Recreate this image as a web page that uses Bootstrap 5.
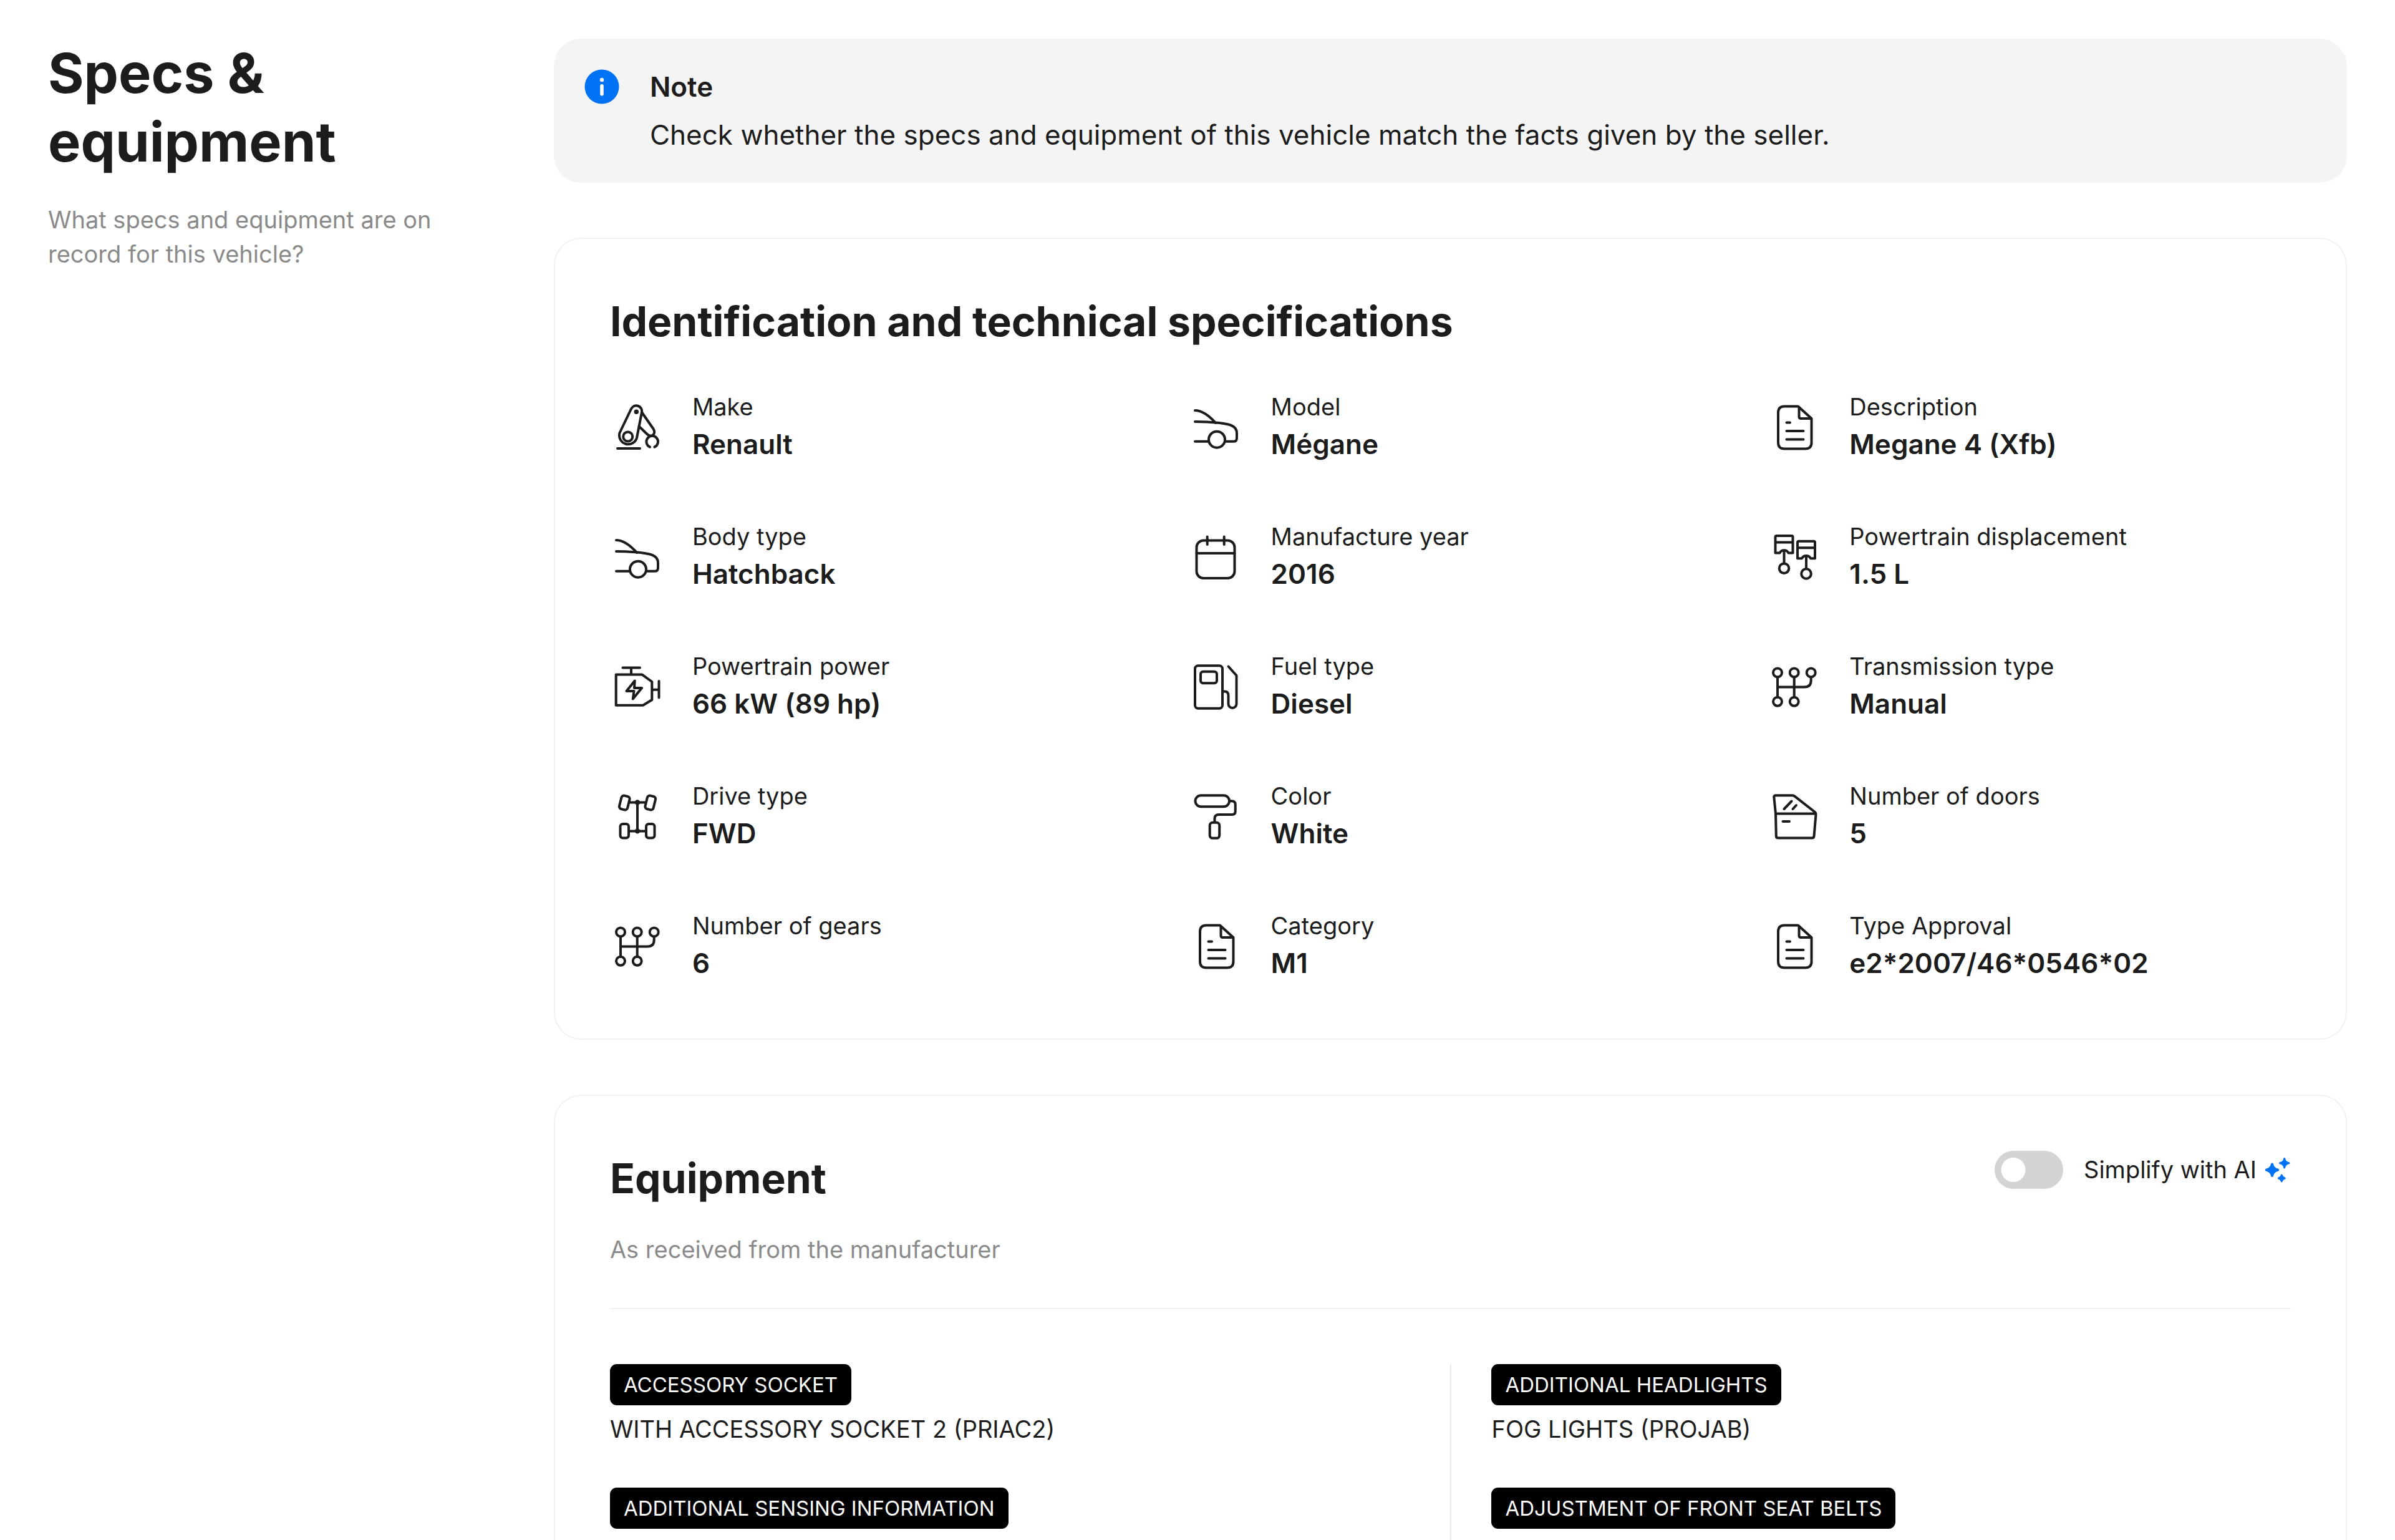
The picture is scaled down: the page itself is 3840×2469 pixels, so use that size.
<!DOCTYPE html>
<html lang="en">
<head>
<meta charset="utf-8">
<meta name="viewport" content="width=device-width, initial-scale=1">
<title>Specs &amp; equipment</title>
<link href="https://cdn.jsdelivr.net/npm/bootstrap@5.3.0/dist/css/bootstrap.min.css" rel="stylesheet">
<style>
  :root { --ink: #1c1c1c; --muted: #8a8a8a; --hairline: #f1f1f1; --accent: #0072f5; }
  body { font-family: Inter, "Liberation Sans", sans-serif; color: var(--ink); background: #fff; font-size: 38px; line-height: 55px; }
  .page { padding: 62px 77px; }
  .intro { flex: 0 0 22%; padding-right: 88px; }
  .page-title { font-size: 88px; line-height: 110px; font-weight: 700; margin-bottom: 43px; }
  .soft { color: var(--muted); }
  .stack { gap: 88px; min-width: 0; }
  .note { background: #f4f4f4; border-radius: 44px; padding: 44px; gap: 44px; font-size: 44px; line-height: 66px; }
  .note-title { font-size: 44px; line-height: 66px; font-weight: 600; margin-bottom: 11px; }
  .note-icon { width: 66px; height: 66px; }
  .panel { border: 2px solid var(--hairline); border-radius: 44px; }
  .panel > .card-body { padding: 88px; }
  .panel-title { font-size: 66px; line-height: 88px; font-weight: 700; margin: 0; }
  .specs { --bs-gutter-x: 88px; --bs-gutter-y: 88px; margin-top: -22px; }
  .spec { gap: 44px; }
  .spec-icon { width: 88px; height: 88px; fill: none; stroke: var(--ink); stroke-width: 4; stroke-linecap: round; stroke-linejoin: round; }
  .spec dt { font-weight: 400; line-height: 54px; }
  .spec dd { font-size: 44px; line-height: 66px; font-weight: 600; margin: 0; font-variant-ligatures: no-contextual; }
  .ai-toggle { gap: 33px; }
  .ai-toggle .form-check-input { width: 110px; height: 61px; margin: 0; border: 0; border-radius: 31px; background: radial-gradient(circle at 30px 50%, #fff 19px, #d4d4d4 20px); }
  .ai-toggle .form-check-input:checked { background: radial-gradient(circle at 80px 50%, #fff 19px, var(--accent) 20px); }
  .ai-label { gap: 11px; }
  .ai-icon { width: 44px; height: 44px; fill: var(--accent); stroke: var(--accent); stroke-width: 3; stroke-linejoin: round; }
  .equipment-head { border-bottom: 2px solid var(--hairline); padding-bottom: 66px; margin-bottom: 88px; }
  .equipment-sub { margin-top: 43px; }
  .equipment-col { display: flex; flex-direction: column; gap: 66px; padding-bottom: 66px; }
  .equipment-col + .equipment-col { border-left: 2px solid #ebebeb; padding-left: 64px; }
  .tag { font-size: 33px; line-height: 66px; font-weight: 400; padding: 0 22px; border-radius: 11px; background: #000; color: #fff; margin-bottom: 11px; }
</style>
<script src="https://cdn.jsdelivr.net/npm/bootstrap@5.3.0/dist/js/bootstrap.bundle.min.js"></script>
</head>
<body class="vh-100 overflow-hidden">

<svg class="d-none" xmlns="http://www.w3.org/2000/svg">
  <symbol id="i-robot" viewBox="0 0 88 88">
    <path d="M12 78H48"/>
    <path d="M15.500 53 34 14.500A9 9 0 0 1 51 20L43 61A14.300 14.300 0 1 1 15.500 53Z"/>
    <circle cx="28.700" cy="59" r="7.500"/>
    <circle cx="42.300" cy="19.300" r="1.800"/>
    <path d="M51 20 69.500 46.500C72.500 51 71.500 55 68 57C65 58.500 62 57.500 59.500 55L46.500 42.500"/>
    <path d="M64 75.700A9.300 9.300 0 1 1 71.400 75.700"/>
  </symbol>
  <symbol id="i-car" viewBox="0 0 88 88">
    <path d="M10 17C23 17 34 27 43 37"/>
    <path d="M10 35C26 35 39 36 49 37C66 39 77 42 77 53V61Q77 66.700 72.500 66.700H59"/>
    <circle cx="45" cy="63.700" r="13"/>
    <path d="M10 66.700H32"/>
  </symbol>
  <symbol id="i-doc" viewBox="1 0 88 88">
    <path d="M51 10.500H29Q19 10.500 19 20.500V68.500Q19 78.500 29 78.500H62.500Q72.500 78.500 72.500 68.500V30Z"/>
    <path d="M52.500 12V27Q52.500 30 55.500 30H72"/>
    <path d="M32.500 36.500H38M32.500 50H59.500M32.500 63.500H59.500"/>
  </symbol>
  <symbol id="i-calendar" viewBox="0 0 88 88">
    <rect x="12.500" y="17.500" width="61" height="60.500" rx="11"/>
    <path d="M12.500 38H73.500M29.700 11.500V24M56.700 11.500V24"/>
  </symbol>
  <symbol id="i-pistons" viewBox="0 0 88 88">
    <g id="piston">
      <path d="M15.500 10H39.500Q41.500 10 41.500 12V37.500H34.500A8 8 0 0 0 20.500 37.500H13.500V12Q13.500 10 15.500 10ZM13.500 20.500H41.500M27.500 34.500V54"/>
      <circle cx="27.500" cy="62.200" r="7.800"/>
    </g>
    <use href="#piston" x="35.500" y="8.700"/>
  </symbol>
  <symbol id="i-engine" viewBox="0 0 88 88">
    <path d="M9.700 24.400H51.300L67.300 36V65L53 73.700H9.700ZM20.500 13.500H48M34 13.500V24M67.300 48.700H78.500M78.500 35V61.500"/>
    <path d="M39.700 34.500 26.500 51H38.500L36.800 63.500 51 46H39Z"/>
  </symbol>
  <symbol id="i-fuel" viewBox="0 0 88 88">
    <rect x="10" y="10.200" width="44" height="68.500" rx="5"/>
    <rect x="19" y="19.800" width="26" height="18.500" rx="4"/>
    <path d="M63.500 11.500 76.500 26V71.500A6.500 6.500 0 0 1 63.500 71.500V58Q63.500 51.600 57 51.600H54"/>
  </symbol>
  <symbol id="i-gears" viewBox="0 0 88 88">
    <circle cx="17" cy="21.400" r="7"/><circle cx="43.700" cy="21.400" r="7"/><circle cx="70.700" cy="21.400" r="7"/>
    <circle cx="17" cy="67.800" r="7"/><circle cx="43.700" cy="67.800" r="7"/>
    <path d="M17 28.500V61M43.700 28.500V61M17 44.500H60Q70.700 44.500 70.700 34V28.500"/>
  </symbol>
  <symbol id="i-drive" viewBox="0 0 88 88">
    <rect x="16.500" y="11" width="13.500" height="22" rx="4" transform="rotate(14 23.200 22)"/>
    <rect x="58" y="11" width="13.500" height="22" rx="4" transform="rotate(14 64.700 22)"/>
    <rect x="16.500" y="56" width="13.500" height="22.500" rx="4"/>
    <rect x="58" y="56" width="13.500" height="22.500" rx="4"/>
    <path d="M31 21.500H57M31 67.400H57M44 21.500V67.400"/>
    <circle cx="44" cy="21.500" r="2.200"/><circle cx="44" cy="67.400" r="2.200"/>
  </symbol>
  <symbol id="i-paint" viewBox="0 0 88 88">
    <rect x="10.500" y="10.200" width="54.500" height="18" rx="9"/>
    <path d="M65 19.200H69Q74.700 19.200 74.700 25V36Q74.700 41 69.500 41H48Q41.500 41 41.500 47.500V53"/>
    <rect x="33.700" y="53.800" width="15.500" height="25" rx="4.500"/>
  </symbol>
  <symbol id="i-door" viewBox="0 0 88 88">
    <path d="M14 10.300H41Q43 10.300 44.500 11.700L77 37Q78.700 38.500 78.500 41L75.500 75.500Q75.200 78.600 72 78.600H18Q14.800 78.600 14.800 75.500L14 39.400 11.300 13Q11.200 10.300 14 10.300ZM14 39.400H78"/>
    <path d="M27.500 32 39.500 19.500M41.500 32 47 26M25.500 52H36"/>
  </symbol>
</svg>

<main class="page d-flex align-items-start">
  <header class="intro">
    <h1 class="page-title">Specs &amp; equipment</h1>
    <p class="soft mb-0">What specs and equipment are on record for this vehicle?</p>
  </header>

  <div class="stack d-flex flex-column flex-grow-1">
    <section class="note d-flex align-items-start" role="note">
      <svg class="note-icon flex-shrink-0" viewBox="0 0 66 66" aria-hidden="true">
        <circle cx="33" cy="33" r="27.500" fill="#0072f5"/>
        <circle cx="33" cy="22" r="3.200" fill="#fff"/>
        <rect x="30.200" y="29" width="5.600" height="18.500" rx="2.800" fill="#fff"/>
      </svg>
      <div>
        <h2 class="note-title">Note</h2>
        <p class="mb-0">Check whether the specs and equipment of this vehicle match the facts given by the seller.</p>
      </div>
    </section>

    <section class="card panel">
      <div class="card-body">
        <h2 class="panel-title">Identification and technical specifications</h2>
        <dl class="row row-cols-3 specs mb-0">
          <div class="col d-flex align-items-center spec"><svg class="spec-icon flex-shrink-0" aria-hidden="true"><use href="#i-robot"/></svg><div><dt>Make</dt><dd>Renault</dd></div></div>
          <div class="col d-flex align-items-center spec"><svg class="spec-icon flex-shrink-0" aria-hidden="true"><use href="#i-car"/></svg><div><dt>Model</dt><dd>Mégane</dd></div></div>
          <div class="col d-flex align-items-center spec"><svg class="spec-icon flex-shrink-0" aria-hidden="true"><use href="#i-doc"/></svg><div><dt>Description</dt><dd>Megane 4 (Xfb)</dd></div></div>
          <div class="col d-flex align-items-center spec"><svg class="spec-icon flex-shrink-0" aria-hidden="true"><use href="#i-car"/></svg><div><dt>Body type</dt><dd>Hatchback</dd></div></div>
          <div class="col d-flex align-items-center spec"><svg class="spec-icon flex-shrink-0" aria-hidden="true"><use href="#i-calendar"/></svg><div><dt>Manufacture year</dt><dd>2016</dd></div></div>
          <div class="col d-flex align-items-center spec"><svg class="spec-icon flex-shrink-0" aria-hidden="true"><use href="#i-pistons"/></svg><div><dt>Powertrain displacement</dt><dd>1.5 L</dd></div></div>
          <div class="col d-flex align-items-center spec"><svg class="spec-icon flex-shrink-0" aria-hidden="true"><use href="#i-engine"/></svg><div><dt>Powertrain power</dt><dd>66 kW (89 hp)</dd></div></div>
          <div class="col d-flex align-items-center spec"><svg class="spec-icon flex-shrink-0" aria-hidden="true"><use href="#i-fuel"/></svg><div><dt>Fuel type</dt><dd>Diesel</dd></div></div>
          <div class="col d-flex align-items-center spec"><svg class="spec-icon flex-shrink-0" aria-hidden="true"><use href="#i-gears"/></svg><div><dt>Transmission type</dt><dd>Manual</dd></div></div>
          <div class="col d-flex align-items-center spec"><svg class="spec-icon flex-shrink-0" aria-hidden="true"><use href="#i-drive"/></svg><div><dt>Drive type</dt><dd>FWD</dd></div></div>
          <div class="col d-flex align-items-center spec"><svg class="spec-icon flex-shrink-0" aria-hidden="true"><use href="#i-paint"/></svg><div><dt>Color</dt><dd>White</dd></div></div>
          <div class="col d-flex align-items-center spec"><svg class="spec-icon flex-shrink-0" aria-hidden="true"><use href="#i-door"/></svg><div><dt>Number of doors</dt><dd>5</dd></div></div>
          <div class="col d-flex align-items-center spec"><svg class="spec-icon flex-shrink-0" aria-hidden="true"><use href="#i-gears"/></svg><div><dt>Number of gears</dt><dd>6</dd></div></div>
          <div class="col d-flex align-items-center spec"><svg class="spec-icon flex-shrink-0" aria-hidden="true"><use href="#i-doc"/></svg><div><dt>Category</dt><dd>M1</dd></div></div>
          <div class="col d-flex align-items-center spec"><svg class="spec-icon flex-shrink-0" aria-hidden="true"><use href="#i-doc"/></svg><div><dt>Type Approval</dt><dd>e2*2007/46*0546*02</dd></div></div>
        </dl>
      </div>
    </section>

    <section class="card panel">
      <div class="card-body">
        <div class="equipment-head d-flex justify-content-between align-items-start">
          <div>
            <h2 class="panel-title">Equipment</h2>
            <p class="equipment-sub soft mb-0">As received from the manufacturer</p>
          </div>
          <div class="ai-toggle form-switch p-0 d-flex align-items-center">
            <input class="form-check-input" type="checkbox" role="switch" id="simplify">
            <label class="ai-label d-flex align-items-center" for="simplify">Simplify with AI
              <svg class="ai-icon" viewBox="0 0 44 44" aria-hidden="true">
                <path d="M14 12.500Q15.500 20.200 23.300 21.700Q15.500 23.200 14 31Q12.500 23.200 4.700 21.700Q12.500 20.200 14 12.500Z" stroke-width="4"/>
                <path d="M33.700 3.500Q34.500 9.700 41 10.700Q34.500 11.700 33.700 18Q32.900 11.700 26.500 10.700Q32.900 9.700 33.700 3.500Z"/>
                <path d="M29.300 30Q30.300 34 34.300 35Q30.300 36 29.300 40Q28.300 36 24.300 35Q28.300 34 29.300 30Z"/>
              </svg>
            </label>
          </div>
        </div>
        <div class="row g-0 row-cols-2">
          <div class="col equipment-col">
            <div><span class="badge tag d-table">ACCESSORY SOCKET</span>WITH ACCESSORY SOCKET 2 (PRIAC2)</div>
            <div><span class="badge tag d-table">ADDITIONAL SENSING INFORMATION</span></div>
          </div>
          <div class="col equipment-col">
            <div><span class="badge tag d-table">ADDITIONAL HEADLIGHTS</span>FOG LIGHTS (PROJAB)</div>
            <div><span class="badge tag d-table">ADJUSTMENT OF FRONT SEAT BELTS</span></div>
          </div>
        </div>
      </div>
    </section>
  </div>
</main>
</body>
</html>
